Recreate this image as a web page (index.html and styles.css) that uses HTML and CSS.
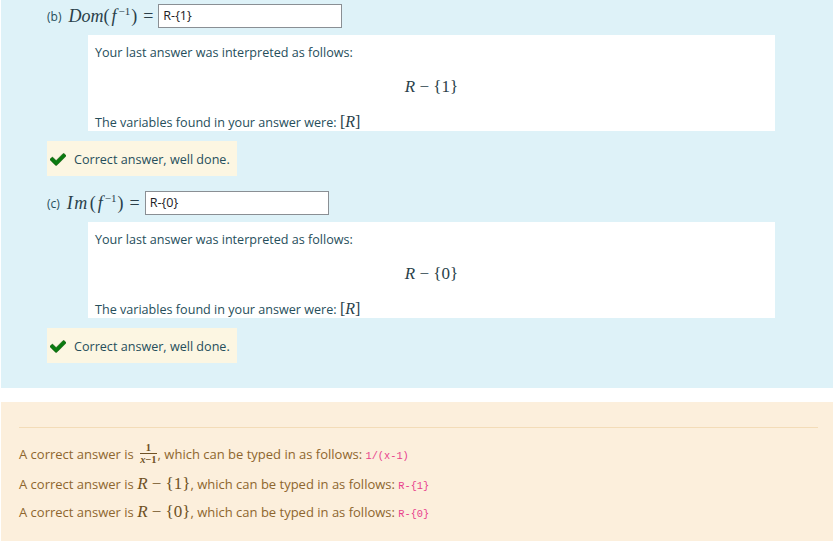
FILE: index.html
```html
<!DOCTYPE html>
<html>
<head>
<meta charset="utf-8">
<link rel="stylesheet" href="styles.css">
</head>
<body>
<div class="que">
  <div class="formulation">
    <div class="part">
      <div class="prompt">
        <span class="lbl">(b)</span>
        <span class="math pmath"><i>Dom</i>(<i class="f">f</i><sup>−1</sup>)<span class="eq">=</span></span>
        <span class="input">R-{1}</span>
      </div>
      <div class="validation">
        <p class="vtext">Your last answer was interpreted as follows:</p>
        <div class="display"><span class="math"><i>R</i> − {1}</span></div>
        <p class="vtext">The variables found in your answer were: <span class="math vars">[<i>R</i>]</span></p>
      </div>
      <div class="feedback">
        <svg class="check" viewBox="121 334 1550 1188" width="16" height="13"><path d="M1671 566q0 40-28 68l-724 724-136 136q-28 28-68 28t-68-28l-136-136-362-362q-28-28-28-68t28-68l136-136q28-28 68-28t68 28l294 295 656-657q28-28 68-28t68 28l136 136q28 28 28 68z" fill="#0b7a10" stroke="#1c3a10" stroke-width="30"/></svg>
        <span>Correct answer, well done.</span>
      </div>
    </div>
    <div class="part part-c">
      <div class="prompt">
        <span class="lbl">(c)</span>
        <span class="math pmath"><i class="im">Im</i>(<i class="f">f</i><sup>−1</sup>)<span class="eq">=</span></span>
        <span class="input">R-{0}</span>
      </div>
      <div class="validation">
        <p class="vtext">Your last answer was interpreted as follows:</p>
        <div class="display"><span class="math"><i>R</i> − {0}</span></div>
        <p class="vtext">The variables found in your answer were: <span class="math vars">[<i>R</i>]</span></p>
      </div>
      <div class="feedback">
        <svg class="check" viewBox="121 334 1550 1188" width="16" height="13"><path d="M1671 566q0 40-28 68l-724 724-136 136q-28 28-68 28t-68-28l-136-136-362-362q-28-28-28-68t28-68l136-136q28-28 68-28t68 28l294 295 656-657q28-28 68-28t68 28l136 136q28 28 28 68z" fill="#0b7a10" stroke="#1c3a10" stroke-width="30"/></svg>
        <span>Correct answer, well done.</span>
      </div>
    </div>
  </div>
  <div class="outcome">
    <hr class="rule">
    <p class="answer first">A correct answer is <span class="frac"><span class="num">1</span><span class="den"><i>x</i>−1</span></span>, which can be typed in as follows: <code>1/(x-1)</code></p>
    <p class="answer">A correct answer is <span class="math"><i>R</i> − {1}</span>, which can be typed in as follows: <code>R-{1}</code></p>
    <p class="answer">A correct answer is <span class="math"><i>R</i> − {0}</span>, which can be typed in as follows: <code>R-{0}</code></p>
  </div>
</div>
</body>
</html>
```

FILE: styles.css
```css
html, body {
  margin: 0;
  padding: 0;
  background: #ffffff;
}

body {
  font-family: "Open Sans", "Noto Sans", sans-serif;
  font-size: 12.6px;
  color: #264e5b;
}

.que {
  width: 832px;
  margin-left: 1px;
}

.formulation {
  background: #def2f8;
  padding: 4px 58px 25px 46px;
}

.part-c {
  margin-top: 15px;
}

.prompt {
  display: flex;
  align-items: center;
  height: 24px;
}

.lbl {
  font-size: 12px;
  margin-right: 7px;
}

.math {
  font-family: "Liberation Serif", "DejaVu Serif", serif;
  font-size: 17px;
  color: #2a3f4a;
  white-space: nowrap;
}

.math i {
  font-style: italic;
}

.pmath {
  font-size: 18px;
  line-height: 24px;
}

.pmath .im {
  letter-spacing: 1.5px;
  margin-right: 1px;
}

.pmath .f {
  margin: 0 2px 0 2px;
}

.math sup {
  font-size: 11px;
  vertical-align: 7px;
  line-height: 0;
  margin-right: 1px;
}

.eq {
  margin: 0 5px 0 6px;
}

.input {
  box-sizing: border-box;
  width: 184px;
  height: 24px;
  border: 1px solid #8a8f94;
  background: #ffffff;
  padding: 0 4px;
  line-height: 22px;
  font-size: 12.6px;
  color: #1d2125;
}

.validation {
  background: #ffffff;
  margin: 7px 0 0 41px;
  padding: 8px 7px 0;
  height: 96px;
  box-sizing: border-box;
}

.vtext {
  margin: 0;
  line-height: 20px;
}

.display {
  text-align: center;
  line-height: 20px;
  margin: 14px 0;
}

.vars {
  font-size: 16px;
}

.feedback {
  display: flex;
  width: fit-content;
  align-items: center;
  gap: 8px;
  margin-top: 10px;
  background: #fcf6e2;
  height: 35px;
  padding: 1px 7px 0 3px;
  box-sizing: border-box;
}

.check {
  display: block;
}

.outcome {
  margin-top: 14px;
  background: #fcefdc;
  color: #8e662e;
  font-size: 13px;
  padding: 25px 15px 19px 18px;
}

.rule {
  margin: 0;
  border: 0;
  border-top: 1px solid #f3dcb8;
}

.answer {
  margin: 8px 0 0;
  line-height: 20px;
  height: 20px;
}

.answer.first {
  margin-top: 16px;
  margin-bottom: 10px;
}

.answer .math {
  color: #6f5124;
}

.frac {
  display: inline-block;
  vertical-align: middle;
  text-align: center;
  font-family: "Liberation Serif", "DejaVu Serif", serif;
  font-size: 10.5px;
  line-height: 9px;
  color: #6f5124;
  margin: -4px 1px 0 3px;
}

.frac .num {
  display: block;
  font-weight: bold;
  padding: 0 1px 1px;
  border-bottom: 1px solid #6f5124;
}

.frac .den {
  display: block;
  font-weight: bold;
  padding-top: 1px;
}

code {
  font-family: "Liberation Mono", "DejaVu Sans Mono", monospace;
  font-size: 10.3px;
  color: #e83e8c;
}
```
